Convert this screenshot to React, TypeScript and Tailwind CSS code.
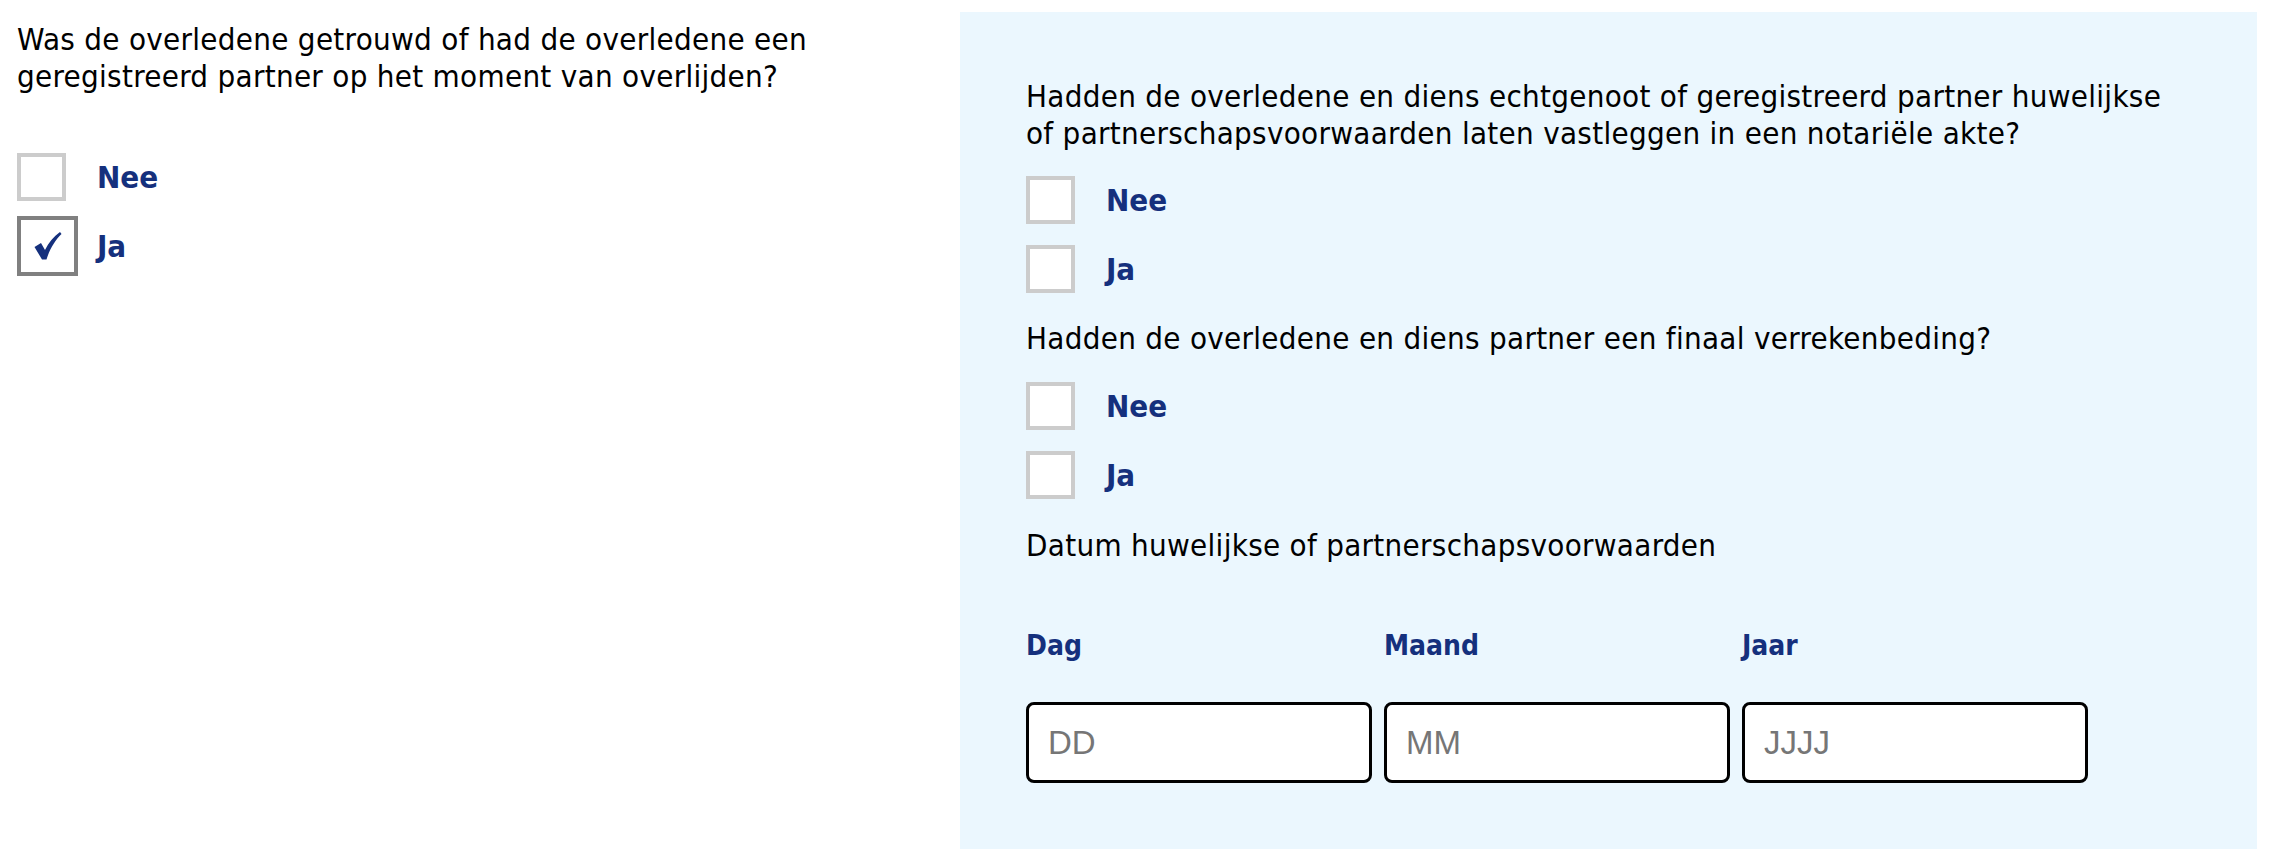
import React from "react";

const NAVY = "text-[#15307d]";

function Check() {
  return (
    <svg viewBox="0 0 28 28" className="h-[28px] w-[28px]" aria-hidden>
      <path
        d="M0.5 15 L7 11 L11 18 C14.5 10.5 19.5 4.5 26 0 L27.5 2 C21.5 8 16 16 12.5 27.5 L8 27.5 Z"
        fill="#15307d"
      />
    </svg>
  );
}

function Option({ label, checked = false }: { label: string; checked?: boolean }) {
  return (
    <div className="flex h-[48px] items-center">
      <div className="flex w-[80px] shrink-0 items-center">
        {checked ? (
          <span className="flex h-[60px] w-[61px] shrink-0 items-center justify-center border-4 border-[#808080] bg-white">
            <Check />
          </span>
        ) : (
          <span className="h-[48px] w-[49px] shrink-0 border-4 border-[#cccccc] bg-white" />
        )}
      </div>
      <span className={`font-bold tracking-normal ${NAVY}`}>{label}</span>
    </div>
  );
}

function DateField({ label, placeholder }: { label: string; placeholder: string }) {
  return (
    <div className="flex w-[346px] flex-col">
      <span className={`text-[28px] font-bold leading-[37px] tracking-normal ${NAVY}`}>{label}</span>
      <input
        placeholder={placeholder}
        className="mt-[38px] h-[81px] w-full rounded-[8px] border-[3px] border-black bg-white pl-[19px] font-['Liberation_Sans',Arial,sans-serif] text-[33px] tracking-normal outline-none placeholder:text-[#767676]"
      />
    </div>
  );
}

export default function App() {
  return (
    <div className="flex min-h-[864px] bg-white font-['DejaVu_Sans_Condensed','DejaVu_Sans',sans-serif] text-[31px] leading-[37px] tracking-[0.3px] text-black">
      <div className="w-[960px] shrink-0 pl-[17px] pr-[60px] pt-[21px]">
        <p>
          Was de overledene getrouwd of had de overledene een geregistreerd partner op het moment van
          overlijden?
        </p>
        <div className="mt-[58px] flex flex-col gap-[21px]">
          <Option label="Nee" />
          <Option label="Ja" checked />
        </div>
      </div>

      <div className="mb-[17px] mt-[12px] w-[1297px] shrink-0 bg-[#ebf7fe] p-[66px]">
        <p>
          Hadden de overledene en diens echtgenoot of geregistreerd partner huwelijkse of
          partnerschapsvoorwaarden laten vastleggen in een notariële akte?
        </p>
        <div className="mt-[24px] flex flex-col gap-[21px]">
          <Option label="Nee" />
          <Option label="Ja" />
        </div>

        <p className="mt-[27px]">Hadden de overledene en diens partner een finaal verrekenbeding?</p>
        <div className="mt-[25px] flex flex-col gap-[21px]">
          <Option label="Nee" />
          <Option label="Ja" />
        </div>

        <p className="mt-[28px]">Datum huwelijkse of partnerschapsvoorwaarden</p>

        <div className="mt-[63px] flex gap-[12px]">
          <DateField label="Dag" placeholder="DD" />
          <DateField label="Maand" placeholder="MM" />
          <DateField label="Jaar" placeholder="JJJJ" />
        </div>
      </div>
    </div>
  );
}
